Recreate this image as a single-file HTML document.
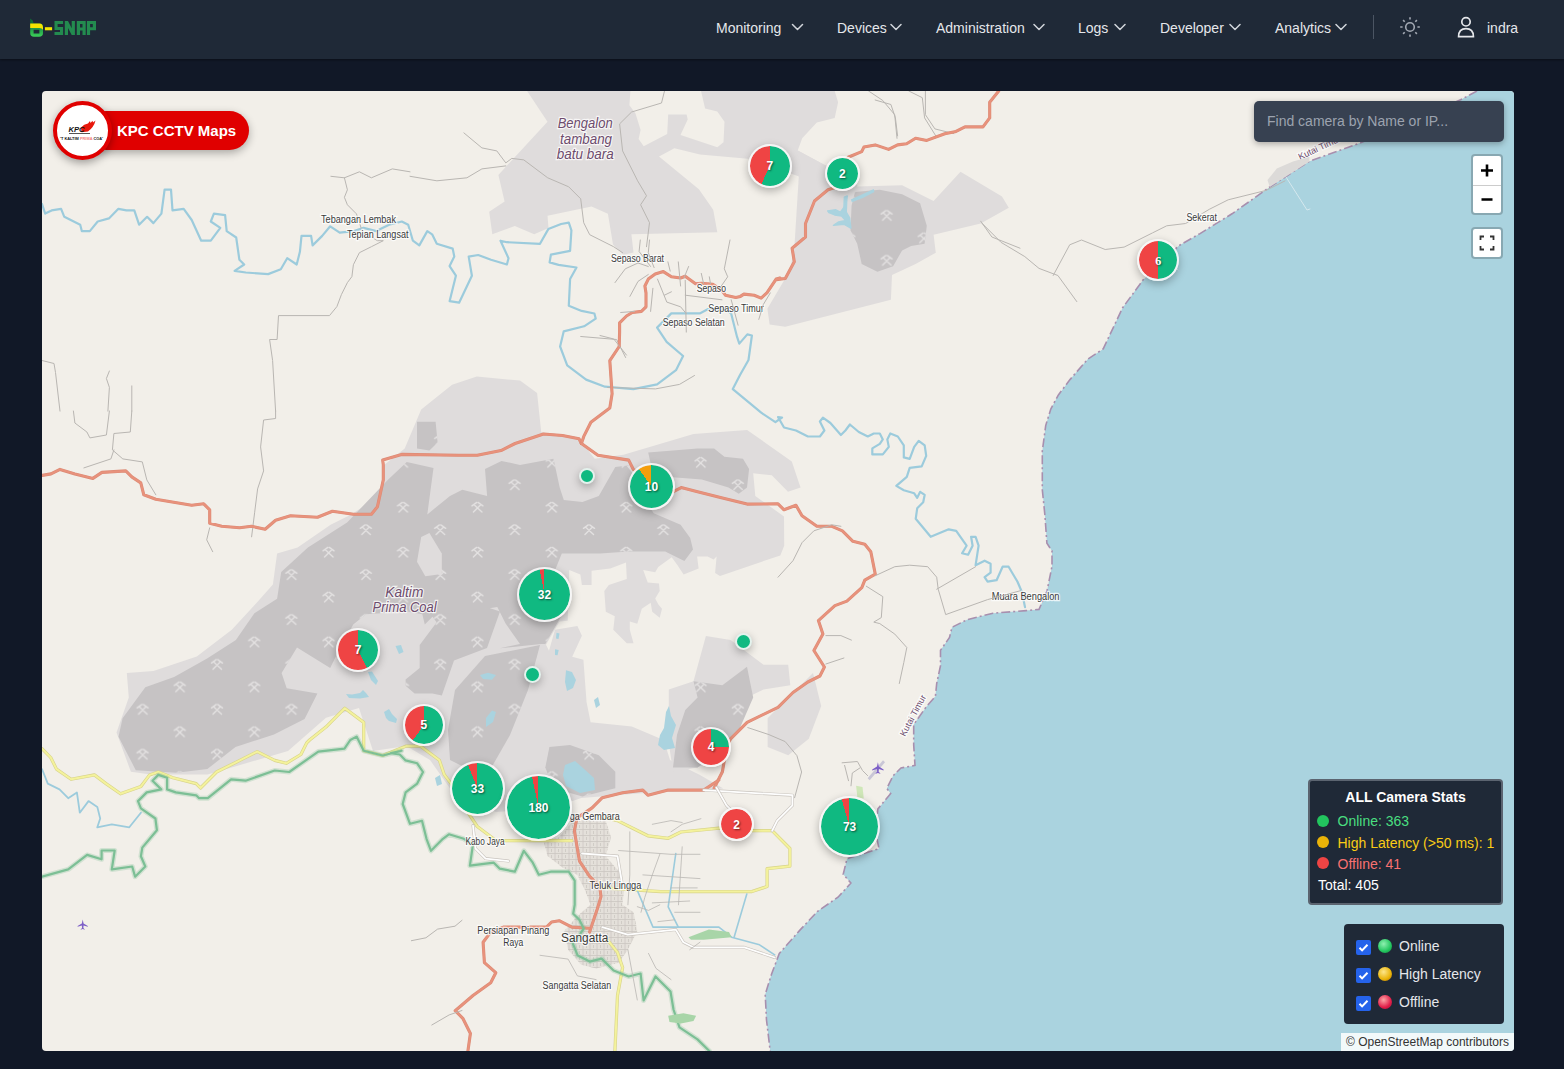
<!DOCTYPE html>
<html><head><meta charset="utf-8">
<style>
*{margin:0;padding:0;box-sizing:border-box}
html,body{width:1564px;height:1069px;overflow:hidden;background:#111827;font-family:"Liberation Sans",sans-serif}
#hdr{position:absolute;left:0;top:0;width:1564px;height:59px;background:#1f2937;box-shadow:0 1px 2px rgba(0,0,0,.4)}
.nav{position:absolute;top:19px;font-size:14px;color:#e5e7eb;line-height:18px;white-space:nowrap}
.chev{position:absolute;top:23px}
#map{position:absolute;left:42px;top:91px;width:1472px;height:960px;background:#f2efe9;overflow:hidden;border-radius:4px}
#map svg{position:absolute;left:0;top:0}

.mk{position:absolute;border-radius:50%;background-clip:padding-box;border-style:solid;border-color:rgba(246,246,246,.92);box-shadow:0 3px 8px rgba(0,0,0,.28);text-align:center}
.mk span{display:block;color:#fff;font-weight:bold;font-size:12px;text-shadow:1px 1px 2px rgba(0,0,0,.55)}
#logo{position:absolute;left:10px;top:10px}
#pill{position:absolute;left:45px;top:19.7px;width:162px;height:39px;background:#e00000;border-radius:20px;box-shadow:0 3px 8px rgba(0,0,0,.3)}
#pill span{position:absolute;left:30px;top:0;line-height:39px;color:#fff;font-weight:bold;font-size:15px;white-space:nowrap}
#circ{position:absolute;left:10.5px;top:9.5px;width:59px;height:59px;border-radius:50%;background:#fff;border:4.6px solid #e00000;box-shadow:0 3px 8px rgba(0,0,0,.35)}
#search{position:absolute;left:1212px;top:10px;width:250px;height:41px;background:#374151;border-radius:5px;box-shadow:0 2px 6px rgba(0,0,0,.3)}
#search span{position:absolute;left:13px;top:0;line-height:41px;color:#9ca3af;font-size:14px;white-space:nowrap}
.lbtn{position:absolute;left:1429px;width:32px;background:#fff;border:2px solid rgba(0,0,0,.2);border-radius:4px;background-clip:padding-box}
#stats{position:absolute;left:1266px;top:688px;width:195px;height:126px;background:#1f2937;border:2px solid rgba(140,150,160,.55);border-radius:4px;color:#fff;font-size:14px}
#stats .r{position:absolute;left:26px;white-space:nowrap;line-height:16px}
#stats .d{position:absolute;left:7px;width:12px;height:12px;border-radius:50%}
#legend{position:absolute;left:1302px;top:833px;width:160px;height:100px;background:#1f2937;border-radius:4px;color:#e5e7eb;font-size:14px}
#legend .cb{position:absolute;left:12px;width:15px;height:15px;background:#2563eb;border-radius:2px}
#legend .ball{position:absolute;left:34px;width:14px;height:14px;border-radius:50%}
#legend .t{position:absolute;left:55px;line-height:16px;white-space:nowrap}
#attr{position:absolute;left:1299px;top:942px;width:173px;height:18px;background:rgba(255,255,255,.85);font-size:12px;color:#333;line-height:18px;padding-left:5px;white-space:nowrap}
</style></head><body>
<div id="hdr">
 <svg style="position:absolute;left:0;top:0" width="100" height="59" viewBox="0 0 100 59">
 <defs><linearGradient id="lg1" x1="0" y1="0" x2="0" y2="1"><stop offset="0" stop-color="#0f7a3a"/><stop offset="1" stop-color="#3ccf5a"/></linearGradient></defs>
 <path d="M30.2 18.5 L32.6 20.5 L33.8 23.6 L30.2 23.6 Z" fill="#0e6b35"/>
 <path d="M30.2 23.6 H40 Q43 23.6 43 27 V33 Q43 36.8 39 36.8 H34 Q30.2 36.8 30.2 33 Z M33.6 29.8 V33.6 H39.4 V29.8 Z" fill="url(#lg1)" fill-rule="evenodd"/>
 <path d="M30.2 23.6 H39.5 Q42.8 23.8 43 27.5 V29.8 Q42 28 39.5 28 H30.2 Z" fill="#f5e400"/>
 <rect x="44.9" y="27.2" width="7.2" height="3.1" fill="#f5e400"/>
 <g fill="#238b4f">
  <path d="M54.5 21h8.6v3.1h-5.5v2.8h5.5v8.2h-8.6v-3.1h5.5v-2.1h-5.5z"/>
  <path d="M64.8 21h3.2l3.7 7.2V21h3.2v14.1h-3.2l-3.7-7.2v7.2h-3.2z"/>
  <path d="M76.8 21h8.9v14.1h-3.2v-4.6h-2.5v4.6h-3.2z M80 24.1v3.3h2.5v-3.3z" fill-rule="evenodd"/>
  <path d="M86.9 21h9.1v9.3h-5.9v4.8h-3.2z M90.1 24.1v3.1h2.7v-3.1z" fill-rule="evenodd"/>
 </g>
</svg>
 <svg style="position:absolute;left:0;top:0" width="1564" height="59" viewBox="0 0 1564 59">
  <g fill="none" stroke="#d1d5db" stroke-width="1.5" stroke-linecap="round" stroke-linejoin="round">
   <path d="M792.5 24.5l5 5 5-5M891 24.5l5 5 5-5M1034 24.5l5 5 5-5M1115 24.5l5 5 5-5M1230 24.5l5 5 5-5M1336 24.5l5 5 5-5"/>
  </g>
  <rect x="1373" y="15" width="1" height="24" fill="#4b5563"/>
  <g stroke="#a3a9b3" stroke-width="1.6" fill="none">
   <circle cx="1410" cy="27" r="4.3"/>
   <path d="M1410 17.2v2.4M1410 34.4v2.4M1400.2 27h2.4M1417.4 27h2.4M1403.1 20.1l1.6 1.6M1415.3 32.3l1.6 1.6M1403.1 33.9l1.6-1.6M1415.3 21.7l1.6-1.6" stroke-linecap="butt"/>
  </g>
  <g stroke="#e5e7eb" stroke-width="1.7" fill="none">
   <circle cx="1466" cy="21.8" r="4.2"/>
   <path d="M1458.6 36.6 Q1458.6 28.6 1466 28.6 Q1473.4 28.6 1473.4 36.6 Z"/>
  </g>
 </svg>
 <div class="nav" style="left:716px">Monitoring</div>
 <div class="nav" style="left:837px">Devices</div>
 <div class="nav" style="left:936px">Administration</div>
 <div class="nav" style="left:1078px">Logs</div>
 <div class="nav" style="left:1160px">Developer</div>
 <div class="nav" style="left:1275px">Analytics</div>
 <div class="nav" style="left:1487px">indra</div>
</div>
<div id="map">
<svg width="1472" height="960" viewBox="42 91 1472 960">
<defs><pattern id="pick" patternUnits="userSpaceOnUse" x="142.6" y="709.6" width="74.4" height="44.9"><g fill="none" stroke="#e4e2e2" stroke-width="1.3" stroke-linecap="round"><g id="pk"><path d="M-4 4.5L3.5-3M0.7-5.1L5.5-1.6M4.5 4.5L-3.5-3M-0.7-5.1L-5.5-1.6"/></g><use href="#pk" x="74.4"/><use href="#pk" y="44.9"/><use href="#pk" x="74.4" y="44.9"/><use href="#pk" x="37.2" y="22.45"/></g></pattern></defs>
<path d="M1477,91 L1460.6,99.8 L1360.6,142.8 L1309,161.5 L1269.8,187 L1232,213.8 L1200,233.6 L1178.8,245.7 L1143,280 L1122.5,308 L1103.2,348.9 L1087.9,359.1 L1070,379.6 L1058.4,394.9 L1050.8,409 L1045.7,425.6 L1042.3,451.2 L1042.3,489.6 L1044.9,515.1 L1046.9,543.3 L1052,551 L1052,566.3 L1047,591 L1039,609.4 L1026.2,610.6 L993,613.2 L967.4,619.6 L952,627.3 L949.5,637.5 L940.5,650.3 L940.5,665.6 L936.7,683.5 L935.4,696.3 L926.5,706.5 L913.7,724.5 L913.7,745 L915,765.4 L901,768 L893.2,775.6 L886.8,788.4 L890.7,793.5 L877.9,808.9 L875.3,831 L879,848.6 L847,858.8 L843.2,874.2 L850.9,883.1 L838,897.2 L817.6,911.3 L799.7,930.4 L779.3,953.5 L771.6,974 L765.2,994.4 L766.5,1020 L770.3,1052 L1515,1052 L1515,90 Z" fill="#aad3df"/>
<path d="M1477,91 L1460.6,99.8 L1360.6,142.8 L1309,161.5 L1269.8,187 L1232,213.8 L1200,233.6 L1178.8,245.7 L1143,280 L1122.5,308 L1103.2,348.9 L1087.9,359.1 L1070,379.6 L1058.4,394.9 L1050.8,409 L1045.7,425.6 L1042.3,451.2 L1042.3,489.6 L1044.9,515.1 L1046.9,543.3 L1052,551 L1052,566.3 L1047,591 L1039,609.4 L1026.2,610.6 L993,613.2 L967.4,619.6 L952,627.3 L949.5,637.5 L940.5,650.3 L940.5,665.6 L936.7,683.5 L935.4,696.3 L926.5,706.5 L913.7,724.5 L913.7,745 L915,765.4 L901,768 L893.2,775.6 L886.8,788.4 L890.7,793.5 L877.9,808.9 L875.3,831 L879,848.6 L847,858.8 L843.2,874.2 L850.9,883.1 L838,897.2 L817.6,911.3 L799.7,930.4 L779.3,953.5 L771.6,974 L765.2,994.4 L766.5,1020 L770.3,1052" fill="none" stroke="#a88fae" stroke-width="1.6" stroke-dasharray="9 3 2 3"/>
<path d="M130.9,771.8 L116.5,732.6 L128.8,697.6 L126.8,672.9 L153.5,670.9 L196.8,656.5 L231.8,629.7 L256.5,602.9 L272.9,584.4 L277.1,553.5 L297.6,547.4 L330.6,524.7 L351.2,514.4 L380.0,495.9 L384.1,465.0 L404.7,448.5 L421.2,409.4 L452.1,384.7 L476.8,376.5 L520.0,380.6 L537.1,392.9 L541.2,432.1 L580.3,440.3 L594.7,458.8 L623.5,454.7 L693.5,434.1 L747.1,430.0 L791.8,461.4 L799.5,484.4 L800.6,487.6 L788,491.8 L771.8,475.3 L753.2,473.2 L755.3,495.9 L784,516.5 L784.2,545.8 L780.3,555.4 L720.0,575.9 L715.1,572.9 L716.6,556.5 L713.6,559.5 L707.6,556.5 L697.1,556.5 L698.6,568.4 L683.6,574.4 L677.7,565.4 L671.7,557.2 L658.2,566.9 L655.2,572.2 L643.2,569.9 L647.7,582.6 L659.0,583.4 L659.7,590.9 L655.2,598.4 L658.2,604.3 L662.0,608.8 L659.7,617.8 L652.2,611.8 L650.7,602.8 L641.8,608.8 L637.3,623.8 L629.8,621.6 L629.8,629.8 L633.5,643.2 L626.8,643.2 L613.3,629.8 L614.8,616.3 L605.8,611.8 L604.3,590.9 L608.8,584.9 L626.8,578.9 L626.0,562.4 L610.3,568.4 L591.6,570.7 L591.6,584.9 L581.9,584.9 L580.4,574.4 L569.2,569.9 L567.7,620.8 L559.5,621.6 L546.0,644.7 L549.0,650.7 L555.0,629.8 L577.4,626.0 L581.9,635.8 L572.2,656.7 L583.4,659.7 L586.4,700.0 L586.5,701.8 L590.6,722.3 L631.8,726.5 L660.6,738.8 L664.7,743 L670,760 L700,775 L723.3,788.6 L638,793.4 L581.4,798 L553,807.6 L496,812 L453.6,793.4 L430,760 L406.3,746 L373,751 L359,708 L326,717.7 L288,751 L207.6,774.5 L150.8,774.5 Z" fill="#dfdcdc"/>
<path d="M705.9,635.9 L730.6,640 L763.5,664.7 L788.2,664.7 L790.3,685.3 L763.5,689.4 L747,697.6 L730.6,738.8 L722.4,755.3 L697.6,767.6 L673,771.8 L668.8,743 L668.8,689.4 L693.5,681.2 Z" fill="#dfdcdc"/>
<path d="M767.6,718.2 L813,673 L821.2,705.9 L808.8,738.8 L788.2,755.3 L767.6,747 Z" fill="#dfdcdc"/>
<path d="M118.5,736.8 L122.6,718.2 L145.3,687.3 L174.1,677.1 L207.1,658.5 L235.9,640.0 L254.4,613.2 L277.1,598.8 L281.2,572.1 L307.9,547.4 L347.1,522.6 L388.2,479.4 L406.8,462.1 L433.5,467.9 L427.3,514.4 L450.0,495.9 L462.3,489.7 L487.1,495.9 L485.0,469.1 L501.5,460.9 L520.0,465.0 L553.5,458.8 L559.7,487.6 L563.8,500.0 L582.4,502.1 L598.8,495.9 L615.3,467.1 L631.8,465.0 L626.9,466.2 L632.6,472.9 L638.4,490.2 L653.7,513.2 L680.6,524.7 L690.2,538.1 L693.0,549.6 L684.4,561.1 L665.2,551.5 L628.8,551.5 L600.0,553.5 L590.6,553.5 L561.8,553.5 L553.5,574.1 L544.5,594.7 L561.8,615.3 L545.3,644.1 L541.2,644.1 L500.0,648.2 L520,644 L505.6,623.5 L497.3,607 L470.6,611.2 L450,617.3 L437.6,623.5 L432.5,616.7 L424.8,624.4 L422.3,614.2 L407,611.6 L366,614.2 L353.2,624.4 L335.3,657.6 L330.2,667.9 L297,647.4 L281.6,673 L286.7,688.3 L317.4,693.5 L304.6,719 L274,734.4 L235.5,747 L207.4,769 L176.7,772.7 L135.8,770.2 Z" fill="#c6c3c4"/><path d="M118.5,736.8 L122.6,718.2 L145.3,687.3 L174.1,677.1 L207.1,658.5 L235.9,640.0 L254.4,613.2 L277.1,598.8 L281.2,572.1 L307.9,547.4 L347.1,522.6 L388.2,479.4 L406.8,462.1 L433.5,467.9 L427.3,514.4 L450.0,495.9 L462.3,489.7 L487.1,495.9 L485.0,469.1 L501.5,460.9 L520.0,465.0 L553.5,458.8 L559.7,487.6 L563.8,500.0 L582.4,502.1 L598.8,495.9 L615.3,467.1 L631.8,465.0 L626.9,466.2 L632.6,472.9 L638.4,490.2 L653.7,513.2 L680.6,524.7 L690.2,538.1 L693.0,549.6 L684.4,561.1 L665.2,551.5 L628.8,551.5 L600.0,553.5 L590.6,553.5 L561.8,553.5 L553.5,574.1 L544.5,594.7 L561.8,615.3 L545.3,644.1 L541.2,644.1 L500.0,648.2 L520,644 L505.6,623.5 L497.3,607 L470.6,611.2 L450,617.3 L437.6,623.5 L432.5,616.7 L424.8,624.4 L422.3,614.2 L407,611.6 L366,614.2 L353.2,624.4 L335.3,657.6 L330.2,667.9 L297,647.4 L281.6,673 L286.7,688.3 L317.4,693.5 L304.6,719 L274,734.4 L235.5,747 L207.4,769 L176.7,772.7 L135.8,770.2 Z" fill="url(#pick)"/>
<path d="M405.6,679.4 L419.7,667.9 L419.7,644.9 L442.7,614.2 L488.7,607.8 L500,611.6 L487,648 L454,660.6 L441.8,695.6 L432.5,693.5 L414.6,693.5 L405.6,685.8 Z" fill="#c6c3c4"/><path d="M405.6,679.4 L419.7,667.9 L419.7,644.9 L442.7,614.2 L488.7,607.8 L500,611.6 L487,648 L454,660.6 L441.8,695.6 L432.5,693.5 L414.6,693.5 L405.6,685.8 Z" fill="url(#pick)"/>
<path d="M448,730 L455,690 L485,656 L540,645 L528,690 L510,735 L490,770 L470,770 L450,760 Z" fill="#c6c3c4"/><path d="M448,730 L455,690 L485,656 L540,645 L528,690 L510,735 L490,770 L470,770 L450,760 Z" fill="url(#pick)"/>
<path d="M693.5,681.2 L722.4,685.3 L747,666.8 L753.2,697.6 L738.8,730.6 L722.4,747 L697.6,767.6 L673,767.6 L677,734.7 L685.3,710 L697.6,697.6 Z" fill="#c6c3c4"/><path d="M693.5,681.2 L722.4,685.3 L747,666.8 L753.2,697.6 L738.8,730.6 L722.4,747 L697.6,767.6 L673,767.6 L677,734.7 L685.3,710 L697.6,697.6 Z" fill="url(#pick)"/>
<path d="M549.4,747 L570,745 L598.8,755.3 L615.3,771.8 L615.3,788.2 L582.4,796.5 L553.5,788.2 L545.3,767.6 Z" fill="#c6c3c4"/><path d="M549.4,747 L570,745 L598.8,755.3 L615.3,771.8 L615.3,788.2 L582.4,796.5 L553.5,788.2 L545.3,767.6 Z" fill="url(#pick)"/>
<path d="M648.2,452.6 L697.6,448.5 L714.1,448.5 L724.4,456.8 L743,458.8 L749.1,469.1 L747,487.6 L738.8,493.8 L728.5,487.6 L701.8,479.4 L672.9,477.3 L652.4,471.2 Z" fill="#c6c3c4"/><path d="M648.2,452.6 L697.6,448.5 L714.1,448.5 L724.4,456.8 L743,458.8 L749.1,469.1 L747,487.6 L738.8,493.8 L728.5,487.6 L701.8,479.4 L672.9,477.3 L652.4,471.2 Z" fill="url(#pick)"/>
<path d="M417,421.8 L435.6,421.8 L437.6,442.4 L429.4,450.6 L417,448.5 Z" fill="#c6c3c4"/><path d="M417,421.8 L435.6,421.8 L437.6,442.4 L429.4,450.6 L417,448.5 Z" fill="url(#pick)"/>
<path d="M421.2,537 L429.4,533 L441.8,553.5 L441.8,574.1 L425.3,576.2 L417,561.8 Z" fill="#dfdcdc"/>
<path d="M527.1,91.0 L834.7,91.0 L838.1,102.2 L834.7,117.9 L816.8,122.4 L802.2,138.2 L797.7,150.5 L826.6,166 L857.7,185.6 L840,200 L799,176.4 L750.6,159.1 L700,154.5 L674.4,148.3 L659.0,156.5 L698.9,189.2 L713.2,209.7 L717.3,232.2 L631.4,234.2 L633.5,252.6 L623.2,254.7 L613.0,244.5 L607.9,213.8 L591.5,206.6 L547.5,215.8 L548.5,228.1 L534.2,234.2 L514.8,226.0 L492.3,234.2 L489.2,211.7 L504.6,201.5 L498.4,174.9 L547.5,121.7 Z" fill="#dfdcdc"/>
<path d="M630.4,91.0 L701.0,91.0 L705.1,108.4 L717.3,111.5 L724.5,121.7 L723.5,142.2 L717.3,147.3 L680.5,135.0 L687.7,119.6 L686.6,114.5 L668.2,114.5 L667.2,134.0 L643.7,146.2 L638.6,139.1 L640.6,129.9 L635.5,113.5 L629.4,105.3 Z" fill="#f2efe9"/>
<path d="M797.7,150.5 L826.6,166 L857.2,186.4 L902.1,185.3 L933.6,201.0 L960.5,171.8 L1002.0,196.5 L1008.8,207.8 L980.7,223.5 L933.6,234.7 L935.8,252.7 L915.6,263.9 L892.0,275.1 L890.9,299.8 L785.3,326.8 L769.6,324.6 L767.4,308.8 L789.8,270.7 L794.3,248.2 L798.8,176.3 Z" fill="#dfdcdc"/>
<path d="M851.6,205.5 L855.0,192.1 L879.7,189.8 L902.1,194.3 L920.1,203.3 L926.8,225.7 L924.6,243.7 L911.1,246.0 L902.1,250.4 L893.1,266.2 L877.4,271.8 L861.7,263.9 L857.2,243.7 L850.5,230.2 Z" fill="#c6c3c4"/><path d="M851.6,205.5 L855.0,192.1 L879.7,189.8 L902.1,194.3 L920.1,203.3 L926.8,225.7 L924.6,243.7 L911.1,246.0 L902.1,250.4 L893.1,266.2 L877.4,271.8 L861.7,263.9 L857.2,243.7 L850.5,230.2 Z" fill="url(#pick)"/>
<path d="M850.8,199.4 L863.4,193.7 L873.8,189.1 L874.4,191.9 L863.4,197.7 L851.9,202.3 Z" fill="#aad3df"/>
<path d="M827.7,210.9 L835.8,209.8 L840.4,212.1 L843.9,207.5 L844.4,197.1 L847.3,196.0 L846.7,200.6 L846.2,212.1 L849.6,217.8 L850.8,228.2 L843.9,224.2 L833.5,225.3 L838.7,221.9 L845.6,220.4 L841.6,216.1 L834.7,214.9 L828.9,212.6 Z" fill="#aad3df" stroke="#aad3df" stroke-width="1.5" stroke-linejoin="round"/>
<path d="M556.5,632.8 L559.5,633.5 L558.5,639 L556,638.5 Z" fill="#aad3df"/>
<path d="M555,649.2 L558.7,650 L557.5,655.2 L555,655 Z" fill="#aad3df"/>
<path d="M566,670.2 L572,672 L576,680 L573,688 L567,691 L565,682 Z" fill="#aad3df"/>
<path d="M368,672 L372,671.5 L378,681 L376,685 L371,680 Z" fill="#aad3df"/>
<path d="M346,694 L352,694.5 L360,693 L363,690 L366,693 L369,697 L360,698.5 L349,698 Z" fill="#aad3df"/>
<path d="M384,712 L389,709 L392,714 L397,719 L396,723 L389,721 L386,718 Z" fill="#aad3df"/>
<path d="M395.5,646 L401,645 L403.5,652 L399,654 Z" fill="#aad3df"/>
<path d="M480,675 L488,672.7 L496,675 L492,679.8 L483,679 Z" fill="#aad3df"/>
<path d="M486,718 L492,710.6 L496,712 L493,722 L486,727 Z" fill="#aad3df"/>
<path d="M660,735 L664,728 L666,712 L669,706 L671,716 L676,725 L672,738 L675,748 L664,750 L658,745 Z" fill="#aad3df"/>
<path d="M565,765 L575,761 L583,768 L594,778 L595,790 L580,793 L566,786 L563,775 Z" fill="#aad3df"/>
<path d="M435,778 L440,775 L442,784 L437,786 Z" fill="#aad3df"/>
<path d="M594,700 L598,697 L600,705 L596,708 Z" fill="#aad3df"/>
<defs><pattern id="st" patternUnits="userSpaceOnUse" width="7" height="6"><path d="M0 1.5H7M2 0V6M5.5 3V6" stroke="#cbc6c1" stroke-width="0.8"/></pattern><pattern id="st2" patternUnits="userSpaceOnUse" width="16" height="13"><path d="M0 2H16M5 0V13" stroke="#dad5cf" stroke-width="0.7"/></pattern></defs><path d="M543.7,841.2 L558.7,837.4 L573.7,820.6 L605.5,820.6 L611.1,837.4 L605.5,856.1 L618.6,871.1 L624.2,889.8 L622.3,904.8 L633.6,912.3 L637.3,931.0 L627.9,949.7 L618.6,962.8 L596.1,968.4 L581.2,964.7 L568.1,949.7 L564.3,931.0 L577.4,916.0 L590.5,904.8 L584.9,889.8 L577.4,874.9 L562.5,867.4 L547.5,856.1 Z" fill="#e4e0da"/><path d="M543.7,841.2 L558.7,837.4 L573.7,820.6 L605.5,820.6 L611.1,837.4 L605.5,856.1 L618.6,871.1 L624.2,889.8 L622.3,904.8 L633.6,912.3 L637.3,931.0 L627.9,949.7 L618.6,962.8 L596.1,968.4 L581.2,964.7 L568.1,949.7 L564.3,931.0 L577.4,916.0 L590.5,904.8 L584.9,889.8 L577.4,874.9 L562.5,867.4 L547.5,856.1 Z" fill="url(#st)"/>
<path d="M42.0,204.0 L45.2,213.6 L51.6,210.4 L61.1,208.8 L64.3,216.8 L80.2,224.7 L81.8,231.1 L89.8,231.1 L97.7,221.5 L108.9,218.4 L118.4,208.8 L126.4,210.4 L134.3,210.4 L139.1,224.7 L147.1,216.8 L153.4,223.1 L161.4,213.6 L164.6,189.7 L171.0,189.7 L172.5,210.4 L183.7,208.8 L191.7,220.0 L201.2,240.7 L210.8,240.7 L220.3,227.9 L210.8,221.5 L213.9,213.6 L225.1,215.2 L226.7,231.1 L236.2,237.5 L239.4,259.8 L244.2,264.5 L234.6,270.9 L245.8,272.5 L268.1,274.1 L280.8,269.3 L287.2,258.2 L296.7,264.5 L299.9,251.8 L301.5,235.9 L311.1,235.9 L312.6,245.4 L322.2,235.9 L330.2,226.3 L339.7,232.7 L354.0,231.1 L363.6,227.9 L376.3,231.1 L389.1,224.7 L401.8,221.5 L408.2,224.7 L412.9,240.7 L419.3,245.4 L427.3,231.1 L432.1,234.3 L436.8,243.8 L452.7,248.6 L454.3,256.6 L449.6,266.1 L455.9,275.7 L449.6,301.2 L459.1,302.7 L471.9,275.7 L468.7,256.6 L478.2,255.0 L491.0,259.8 L506.9,264.5 L508.5,258.2 L500.5,240.7 L506.9,242.2 L540.0,243.8 L548.3,229.1 L548.3,229.1 L561.1,224.0 L568.8,222.7 L571.4,230.4 L570.1,250.8 L550.9,254.7 L549.6,262.4 L558.6,264.9 L576.5,267.5 L570.1,279.0 L568.8,305.8 L581.6,310.9 L594.4,313.5 L595.7,318.6 L584.1,326.3 L563.7,331.4 L560.1,346.5 L567.2,365.4 L586.1,379.6 L605.0,386.7 L633.4,389.1 L657.1,384.4 L676.0,370.2 L683.1,356.0 L666.6,341.8 L657.1,327.6 L671.3,313.4 L699.7,313.4 L708.2,309.1 L725.4,309.1 L731.2,313.7 L737.0,336.7 L739.3,343.6 L747.3,334.4 L751.9,335.5 L748.5,360.0 L740,375 L732.8,389.1 L761.2,412.7 L775.4,422.2 L782.0,417.5 L778.0,417.0 L784.0,427.5 L796.0,430.5 L807.9,436.5 L819.9,436.5 L824.4,430.5 L819.9,421.5 L822.9,417.6 L830.4,423.0 L840.9,435.0 L845.4,430.5 L849.9,424.5 L858.8,432.0 L867.8,436.5 L873.8,433.5 L879.8,433.5 L882.8,439.4 L879.8,443.9 L872.3,448.4 L872.3,454.4 L882.8,454.4 L888.8,446.9 L887.3,439.4 L890.3,433.5 L897.8,436.5 L903.8,445.4 L903.8,457.4 L909.7,458.9 L914.2,446.9 L918.7,440.9 L924.7,445.4 L926.2,455.9 L921.7,466.4 L909.7,467.9 L906.8,476.9 L896.3,485.9 L903.8,490.3 L914.2,493.3 L917.2,497.8 L920.2,491.8 L924.7,494.8 L923.2,502.3 L917.2,508.3 L915.7,518.8 L930.7,536.8 L948.7,529.3 L956.2,530.8 L966.6,545.7 L962.1,553.2 L968.1,554.7 L972.6,545.7 L971.1,536.8 L975.6,536.8 L978.6,545.7 L975.6,565.2 L984.6,560.7 L990.6,563.7 L990.6,572.7 L984.6,577.2 L987.6,581.7 L996.6,580.2 L1002.6,566.7 L1008.6,566.7 L1017.5,581.7 L1022.0,592.2 L1025.0,607.1" fill="none" stroke="#9ccbdc" stroke-width="2.2" stroke-linejoin="round" stroke-linecap="round" />
<path d="M330.9,176.3 L344.4,177.8 L347.4,189.8 L344.4,197.3 L347.4,204.8 L356.4,213.8 L362.4,231.7 L377.4,240.7 L383.3,240.7 L371.4,246.7 L359.4,252.7 L353.4,264.7 L351.9,276.6 L347.4,282.6 L341.4,294.6 L336.9,306.6 L329.5,315.6 L278.5,315.6 L277.1,339.5 L269.6,339.5 L272.6,360.5 L275.6,411.1" fill="none" stroke="#b9b6b2" stroke-width="1.0" stroke-linejoin="round" stroke-linecap="round" />
<path d="M344.4,177.8 L359.4,171.8 L371.4,177.8 L392.3,168.9 L410.0,171.8" fill="none" stroke="#b9b6b2" stroke-width="1.0" stroke-linejoin="round" stroke-linecap="round" />
<path d="M42.0,360.5 L54.0,363.5 L55.5,372.5 L60.0,411.1" fill="none" stroke="#b9b6b2" stroke-width="1.0" stroke-linejoin="round" stroke-linecap="round" />
<path d="M109.4,371.0 L106.4,378.5 L109.4,387.4 L107.9,411.1" fill="none" stroke="#b9b6b2" stroke-width="1.0" stroke-linejoin="round" stroke-linecap="round" />
<path d="M131.8,385.9 L131.8,411.1" fill="none" stroke="#b9b6b2" stroke-width="1.0" stroke-linejoin="round" stroke-linecap="round" />
<path d="M73.4,411.0 L74.9,423.0 L86.9,432.0 L89.9,437.9 L106.4,435.0 L109.4,411.0" fill="none" stroke="#b9b6b2" stroke-width="1.0" stroke-linejoin="round" stroke-linecap="round" />
<path d="M131.8,411.0 L130.3,432.0 L113.9,433.5 L112.4,449.9 L122.8,458.9 L142.3,461.9 L146.8,479.9 L155.8,494.8" fill="none" stroke="#b9b6b2" stroke-width="1.0" stroke-linejoin="round" stroke-linecap="round" />
<path d="M83.9,467.9 L110.9,458.9 L113.9,449.9" fill="none" stroke="#b9b6b2" stroke-width="1.0" stroke-linejoin="round" stroke-linecap="round" />
<path d="M275.6,411.0 L275.6,418.5 L263.6,420.0 L260.6,446.9 L263.6,470.9 L257.6,488.9 L254.6,512.8 L251.6,536.8" fill="none" stroke="#b9b6b2" stroke-width="1.0" stroke-linejoin="round" stroke-linecap="round" />
<path d="M209.7,527.8 L206.7,539.8 L212.7,551.7" fill="none" stroke="#b9b6b2" stroke-width="1.0" stroke-linejoin="round" stroke-linecap="round" />
<path d="M463.9,132.9 L481.9,147.9 L496.8,150.9 L505.8,162.9 L511.8,158.4 L523.8,159.9 L547.7,177.8 L568.7,186.8 L580.7,198.8 L583.7,222.7 L589.7,234.7 L613.6,246.7 L622.6,252.7" fill="none" stroke="#b9b6b2" stroke-width="1.0" stroke-linejoin="round" stroke-linecap="round" />
<path d="M410.0,176.3 L436.9,180.8 L466.9,177.8 L481.9,168.9 L505.8,165.9" fill="none" stroke="#b9b6b2" stroke-width="1.0" stroke-linejoin="round" stroke-linecap="round" />
<path d="M664.5,91.0 L661.5,103.0 L631.6,112.0 L619.6,123.9 L622.6,150.9 L637.6,180.8 L646.5,195.8 L640.6,204.8 L649.5,222.7 L646.5,246.7" fill="none" stroke="#b9b6b2" stroke-width="1.0" stroke-linejoin="round" stroke-linecap="round" />
<path d="M580.7,336.5 L616.6,339.5 L625.6,357.5" fill="none" stroke="#b9b6b2" stroke-width="1.0" stroke-linejoin="round" stroke-linecap="round" />
<path d="M607.6,387.4 L655.5,388.9 L679.5,384.4 L694.5,375.5" fill="none" stroke="#b9b6b2" stroke-width="1.0" stroke-linejoin="round" stroke-linecap="round" />
<path d="M868.6,91.0 L882.8,100.5 L894.7,114.7 L897.0,138.3" fill="none" stroke="#b9b6b2" stroke-width="1.0" stroke-linejoin="round" stroke-linecap="round" />
<path d="M925.4,91.0 L925.4,114.7 L934.9,128.9 L953.8,133.6" fill="none" stroke="#b9b6b2" stroke-width="1.0" stroke-linejoin="round" stroke-linecap="round" />
<path d="M982.2,223.5 L1001.1,242.4 L1024.8,256.6 L1039.0,268.4 L1057.9,275.5 L1076.8,301.6" fill="none" stroke="#b9b6b2" stroke-width="1.0" stroke-linejoin="round" stroke-linecap="round" />
<path d="M1053.2,275.5 L1069.7,244.8 L1081.5,240.0 L1105.2,249.5 L1124.1,247.1 L1152.5,232.9 L1166.7,225.8 L1185.6,223.5 L1209.3,209.3 L1228.2,199.8 L1266.1,190.4 L1285.0,180.9" fill="none" stroke="#b9b6b2" stroke-width="1.0" stroke-linejoin="round" stroke-linecap="round" />
<path d="M747.8,727.6 L768.9,734.6 L785.2,741.6 L796.9,755.6 L801.6,772.0 L794.6,797.7" fill="none" stroke="#b9b6b2" stroke-width="1.0" stroke-linejoin="round" stroke-linecap="round" />
<path d="M875.2,100.0 L890.9,104.5 L895.4,117.9 L897.6,135.9" fill="none" stroke="#b9b6b2" stroke-width="1.0" stroke-linejoin="round" stroke-linecap="round" />
<path d="M908.8,91.0 L922.3,97.7 L924.6,117.9 L935.8,135.9" fill="none" stroke="#b9b6b2" stroke-width="1.0" stroke-linejoin="round" stroke-linecap="round" />
<path d="M980.7,221.2 L991.9,237.0 L1020.0,248.2" fill="none" stroke="#b9b6b2" stroke-width="1.0" stroke-linejoin="round" stroke-linecap="round" />
<path d="M42.0,475.4 L51.0,473.9 L60.0,469.4 L74.9,473.9 L92.9,478.4 L101.9,472.4 L125.8,470.9 L131.8,476.9 L140.8,482.9 L143.8,494.8 L155.8,499.3 L173.7,502.3 L191.7,505.3 L203.7,503.8 L209.7,509.8 L209.7,523.3 L221.7,526.3 L239.6,527.8 L251.6,526.3 L265.1,529.3 L275.6,520.3 L290.5,515.8 L317.5,517.3 L332.4,511.3 L353.4,514.3 L371.4,514.3 L377.4,506.8 L383.3,479.9 L383.3,464.9 L382.7,460.1 L401.6,454.4 L458.4,455.3 L477.3,455.3 L501.0,450.6 L515.1,443.5 L543.5,434.0 L562.5,435.5 L579.0,438.8 L581.4,443.5" fill="none" stroke="#dc8b76" stroke-width="3.1" stroke-linejoin="round" stroke-linecap="round"/><path d="M42.0,475.4 L51.0,473.9 L60.0,469.4 L74.9,473.9 L92.9,478.4 L101.9,472.4 L125.8,470.9 L131.8,476.9 L140.8,482.9 L143.8,494.8 L155.8,499.3 L173.7,502.3 L191.7,505.3 L203.7,503.8 L209.7,509.8 L209.7,523.3 L221.7,526.3 L239.6,527.8 L251.6,526.3 L265.1,529.3 L275.6,520.3 L290.5,515.8 L317.5,517.3 L332.4,511.3 L353.4,514.3 L371.4,514.3 L377.4,506.8 L383.3,479.9 L383.3,464.9 L382.7,460.1 L401.6,454.4 L458.4,455.3 L477.3,455.3 L501.0,450.6 L515.1,443.5 L543.5,434.0 L562.5,435.5 L579.0,438.8 L581.4,443.5" fill="none" stroke="#e8927c" stroke-width="2.0" stroke-linejoin="round" stroke-linecap="round"/>
<path d="M581.4,443.5 L583.8,436.4 L590.9,422.2 L609.8,408.0 L612.1,393.8 L609.8,360.7 L619.2,346.5 L619.6,332.1 L619.6,322.9 L626.5,316.0 L632.2,312.5 L641.4,311.4 L646.0,306.8 L646.0,292.9 L644.9,286.0 L648.3,279.1 L655.2,274.0 L663.3,271.6 L671.4,276.8 L680.6,278.0 L685.2,276.3 L695.5,283.7 L701.3,283.2 L712.8,284.3 L722.0,290.6 L725.4,295.2 L735.8,297.5 L740.4,296.4 L743.9,294.1 L754.2,295.2 L761.1,298.1 L766.9,292.9 L776.1,279.1 L780.0,278.0 L776.4,279.6 L785.3,278.5 L794.3,261.7 L792.1,248.2 L805.5,237.0 L805.5,223.5 L814.5,201.0 L828.0,189.8 L834.7,187.6 L848.2,157.2 L861.7,151.6 L863.9,147.1 L875.2,144.9 L888.6,149.4 L897.6,144.9 L906.6,143.8 L915.6,138.2 L926.8,140.4 L944.8,133.7 L956.0,131.4 L965.0,126.9 L983.0,126.9 L989.7,117.9 L989.7,102.2 L998.7,91.0" fill="none" stroke="#dc8b76" stroke-width="3.1" stroke-linejoin="round" stroke-linecap="round"/><path d="M581.4,443.5 L583.8,436.4 L590.9,422.2 L609.8,408.0 L612.1,393.8 L609.8,360.7 L619.2,346.5 L619.6,332.1 L619.6,322.9 L626.5,316.0 L632.2,312.5 L641.4,311.4 L646.0,306.8 L646.0,292.9 L644.9,286.0 L648.3,279.1 L655.2,274.0 L663.3,271.6 L671.4,276.8 L680.6,278.0 L685.2,276.3 L695.5,283.7 L701.3,283.2 L712.8,284.3 L722.0,290.6 L725.4,295.2 L735.8,297.5 L740.4,296.4 L743.9,294.1 L754.2,295.2 L761.1,298.1 L766.9,292.9 L776.1,279.1 L780.0,278.0 L776.4,279.6 L785.3,278.5 L794.3,261.7 L792.1,248.2 L805.5,237.0 L805.5,223.5 L814.5,201.0 L828.0,189.8 L834.7,187.6 L848.2,157.2 L861.7,151.6 L863.9,147.1 L875.2,144.9 L888.6,149.4 L897.6,144.9 L906.6,143.8 L915.6,138.2 L926.8,140.4 L944.8,133.7 L956.0,131.4 L965.0,126.9 L983.0,126.9 L989.7,117.9 L989.7,102.2 L998.7,91.0" fill="none" stroke="#e8927c" stroke-width="2.0" stroke-linejoin="round" stroke-linecap="round"/>
<path d="M581.4,443.5 L597.9,455.3 L628.7,460.1 L633.4,469.5 L672.9,491.8 L681.2,487.6 L697.6,491.8 L722.4,497.9 L747.1,504.1 L778.0,503.8 L784.0,509.8 L796.0,505.3 L802.0,515.8 L816.9,526.3 L831.9,526.3 L842.4,530.8 L852.9,541.3 L864.8,544.2 L870.8,551.7 L875.3,574.2 L864.8,580.2 L861.8,587.7 L846.9,601.1 L834.9,605.6 L818.4,620.6 L822.9,634.1 L813.9,650.5 L824.4,667.0 L819.9,676.0 L807.9,682.0 L793.0,692.5 L778.0,707.4 L747.1,722.3 L730.6,738.8 L726.5,747.1 L722.4,771.8 L714.1,788.2" fill="none" stroke="#dc8b76" stroke-width="3.1" stroke-linejoin="round" stroke-linecap="round"/><path d="M581.4,443.5 L597.9,455.3 L628.7,460.1 L633.4,469.5 L672.9,491.8 L681.2,487.6 L697.6,491.8 L722.4,497.9 L747.1,504.1 L778.0,503.8 L784.0,509.8 L796.0,505.3 L802.0,515.8 L816.9,526.3 L831.9,526.3 L842.4,530.8 L852.9,541.3 L864.8,544.2 L870.8,551.7 L875.3,574.2 L864.8,580.2 L861.8,587.7 L846.9,601.1 L834.9,605.6 L818.4,620.6 L822.9,634.1 L813.9,650.5 L824.4,667.0 L819.9,676.0 L807.9,682.0 L793.0,692.5 L778.0,707.4 L747.1,722.3 L730.6,738.8 L726.5,747.1 L722.4,771.8 L714.1,788.2" fill="none" stroke="#e8927c" stroke-width="2.0" stroke-linejoin="round" stroke-linecap="round"/>
<path d="M718.9,780.0 L703.7,790.1 L668.2,790.1 L647.9,795.2 L642.8,790.1 L622.6,792.7 L602.3,797.7 L592.1,807.9 L576.9,818.0 L574.4,830.7 L576.9,845.9 L579.5,861.1 L589.6,876.3 L599.7,886.5 L601.0,896.6 L597.2,909.3 L592.1,924.5 L589.6,932.1" fill="none" stroke="#dc8b76" stroke-width="3.1" stroke-linejoin="round" stroke-linecap="round"/><path d="M718.9,780.0 L703.7,790.1 L668.2,790.1 L647.9,795.2 L642.8,790.1 L622.6,792.7 L602.3,797.7 L592.1,807.9 L576.9,818.0 L574.4,830.7 L576.9,845.9 L579.5,861.1 L589.6,876.3 L599.7,886.5 L601.0,896.6 L597.2,909.3 L592.1,924.5 L589.6,932.1" fill="none" stroke="#e8927c" stroke-width="2.0" stroke-linejoin="round" stroke-linecap="round"/>
<path d="M589.6,928.3 L571.8,927.1 L559.2,920.7 L551.6,922.0 L546.5,927.1 L523.7,927.1 L503.4,927.1 L490.7,932.1 L483.1,942.3 L484.4,962.6 L495.8,972.7 L490.7,982.8 L473.0,995.5 L455.2,1010.7 L462.8,1018.3 L470.4,1033.5 L467.9,1051.0" fill="none" stroke="#dc8b76" stroke-width="3.1" stroke-linejoin="round" stroke-linecap="round"/><path d="M589.6,928.3 L571.8,927.1 L559.2,920.7 L551.6,922.0 L546.5,927.1 L523.7,927.1 L503.4,927.1 L490.7,932.1 L483.1,942.3 L484.4,962.6 L495.8,972.7 L490.7,982.8 L473.0,995.5 L455.2,1010.7 L462.8,1018.3 L470.4,1033.5 L467.9,1051.0" fill="none" stroke="#e8927c" stroke-width="2.0" stroke-linejoin="round" stroke-linecap="round"/>
<path d="M42.0,748.7 L50.7,757.5 L56.5,769.1 L71.1,779.3 L94.4,774.9 L106.0,783.6 L120.5,793.8 L140.9,786.5 L149.6,774.9 L158.3,772.0 L172.9,777.8 L196.2,783.6 L200.5,788.0 L216.5,772.0 L239.8,760.4 L257.2,751.6 L274.7,760.4 L286.3,763.3 L300.9,754.5 L306.7,742.9 L309.6,740.0 L325.9,727.1 L344.8,708.2 L363.7,722.4 L363.7,750.8 L382.7,755.5 L406.3,746.1 L420.5,746.1 L439.4,760.3 L444.2,774.5 L458.4,793.4 L467.8,812.3 L477.3,826.5 L496.2,840.7 L519.9,840.7 L571.9,840.7" fill="none" stroke="#d7d38a" stroke-width="3.2" stroke-linejoin="round" stroke-linecap="round"/><path d="M42.0,748.7 L50.7,757.5 L56.5,769.1 L71.1,779.3 L94.4,774.9 L106.0,783.6 L120.5,793.8 L140.9,786.5 L149.6,774.9 L158.3,772.0 L172.9,777.8 L196.2,783.6 L200.5,788.0 L216.5,772.0 L239.8,760.4 L257.2,751.6 L274.7,760.4 L286.3,763.3 L300.9,754.5 L306.7,742.9 L309.6,740.0 L325.9,727.1 L344.8,708.2 L363.7,722.4 L363.7,750.8 L382.7,755.5 L406.3,746.1 L420.5,746.1 L439.4,760.3 L444.2,774.5 L458.4,793.4 L467.8,812.3 L477.3,826.5 L496.2,840.7 L519.9,840.7 L571.9,840.7" fill="none" stroke="#f4f29c" stroke-width="2.0" stroke-linejoin="round" stroke-linecap="round"/>
<path d="M602.3,887.8 L660.6,891.6 L751.9,891.6 L767.1,886.5 L767.1,868.7 L789.9,866.2 L789.9,848.5 L772.2,830.7 L751.9,830.7 L718.9,828.2 L680.9,832.0 L668.2,838.3 L647.9,835.8 L632.7,828.2 L617.5,820.6 L604.8,818.0" fill="none" stroke="#d7d38a" stroke-width="3.2" stroke-linejoin="round" stroke-linecap="round"/><path d="M602.3,887.8 L660.6,891.6 L751.9,891.6 L767.1,886.5 L767.1,868.7 L789.9,866.2 L789.9,848.5 L772.2,830.7 L751.9,830.7 L718.9,828.2 L680.9,832.0 L668.2,838.3 L647.9,835.8 L632.7,828.2 L617.5,820.6 L604.8,818.0" fill="none" stroke="#f4f29c" stroke-width="2.0" stroke-linejoin="round" stroke-linecap="round"/>
<path d="M607.3,939.7 L617.5,952.4 L622.6,967.6 L617.5,995.5 L614.9,1051.0" fill="none" stroke="#d7d38a" stroke-width="3.2" stroke-linejoin="round" stroke-linecap="round"/><path d="M607.3,939.7 L617.5,952.4 L622.6,967.6 L617.5,995.5 L614.9,1051.0" fill="none" stroke="#f4f29c" stroke-width="2.0" stroke-linejoin="round" stroke-linecap="round"/>
<path d="M42.0,876.7 L68.2,869.4 L87.1,854.9 L101.6,859.3 L101.6,850.5 L114.7,850.5 L111.8,869.4 L132.2,866.5 L135.1,876.7 L145.3,866.5 L140.9,856.3 L142.3,847.6 L156.9,830.2 L155.4,818.5 L140.9,808.4 L138.0,801.1 L146.7,792.4 L161.3,789.4 L152.5,780.7 L158.3,774.9 L167.1,777.8 L167.1,789.4 L175.8,792.4 L196.2,795.3 L199.1,798.2 L207.8,798.2 L231.1,779.3 L245.6,780.7 L274.7,770.5 L289.2,772.0 L318.3,751.6 L344.5,748.7 L350.3,740.0 L356.6,736.6 L363.7,750.8 L382.7,755.5 L401.6,750.8 L391.0,753.1 L399.8,754.5 L405.6,760.4 L417.2,763.3 L423.0,772.0 L417.2,783.6 L405.6,792.4 L402.7,804.0 L410.0,823.8 L422.0,820.8 L426.5,838.8 L431.0,850.8 L442.9,838.8 L448.9,834.3 L463.9,838.8 L472.9,844.8 L469.9,865.7 L493.8,862.7 L499.8,868.7 L514.8,871.7 L523.8,850.8 L532.8,862.7 L538.8,874.7 L550.7,871.7 L568.7,871.7 L574.7,880.7 L574.7,904.7 L573.2,913.7 L579.2,919.6 L583.7,928.6 L577.7,937.6 L571.7,940.6 L577.7,955.6 L589.7,961.6 L601.6,958.6 L613.6,970.5 L628.6,976.5 L640.6,973.5 L643.6,1000.5 L655.5,976.5 L670.5,991.5 L673.5,1009.5 L679.5,1027.4 L697.5,1039.4 L709.4,1051.1" fill="none" stroke="#7cbf95" stroke-opacity="0.28" stroke-width="5" stroke-linejoin="round" stroke-linecap="round"/>
<path d="M42.0,876.7 L68.2,869.4 L87.1,854.9 L101.6,859.3 L101.6,850.5 L114.7,850.5 L111.8,869.4 L132.2,866.5 L135.1,876.7 L145.3,866.5 L140.9,856.3 L142.3,847.6 L156.9,830.2 L155.4,818.5 L140.9,808.4 L138.0,801.1 L146.7,792.4 L161.3,789.4 L152.5,780.7 L158.3,774.9 L167.1,777.8 L167.1,789.4 L175.8,792.4 L196.2,795.3 L199.1,798.2 L207.8,798.2 L231.1,779.3 L245.6,780.7 L274.7,770.5 L289.2,772.0 L318.3,751.6 L344.5,748.7 L350.3,740.0 L356.6,736.6 L363.7,750.8 L382.7,755.5 L401.6,750.8 L391.0,753.1 L399.8,754.5 L405.6,760.4 L417.2,763.3 L423.0,772.0 L417.2,783.6 L405.6,792.4 L402.7,804.0 L410.0,823.8 L422.0,820.8 L426.5,838.8 L431.0,850.8 L442.9,838.8 L448.9,834.3 L463.9,838.8 L472.9,844.8 L469.9,865.7 L493.8,862.7 L499.8,868.7 L514.8,871.7 L523.8,850.8 L532.8,862.7 L538.8,874.7 L550.7,871.7 L568.7,871.7 L574.7,880.7 L574.7,904.7 L573.2,913.7 L579.2,919.6 L583.7,928.6 L577.7,937.6 L571.7,940.6 L577.7,955.6 L589.7,961.6 L601.6,958.6 L613.6,970.5 L628.6,976.5 L640.6,973.5 L643.6,1000.5 L655.5,976.5 L670.5,991.5 L673.5,1009.5 L679.5,1027.4 L697.5,1039.4 L709.4,1051.1" fill="none" stroke="#7cbf95" stroke-width="2.2" stroke-linejoin="round" stroke-linecap="round" />
<path d="M703.7,790.1 L792.4,795.2 L792.4,805.4 L777.2,820.6 L772.2,830.7" fill="none" stroke="#c9c4be" stroke-width="3.0" stroke-linejoin="round" stroke-linecap="round"/><path d="M703.7,790.1 L792.4,795.2 L792.4,805.4 L777.2,820.6 L772.2,830.7" fill="none" stroke="#fefefe" stroke-width="1.8" stroke-linejoin="round" stroke-linecap="round"/>
<path d="M716.4,787.6 L726.5,805.4 L734.1,813.0" fill="none" stroke="#c9c4be" stroke-width="3.0" stroke-linejoin="round" stroke-linecap="round"/><path d="M716.4,787.6 L726.5,805.4 L734.1,813.0" fill="none" stroke="#fefefe" stroke-width="1.8" stroke-linejoin="round" stroke-linecap="round"/>
<path d="M602.3,927.1 L627.6,934.7 L675.8,929.6 L683.4,942.3 L693.5,947.3 L744.3,947.3 L774.7,957.5" fill="none" stroke="#c9c4be" stroke-width="3.0" stroke-linejoin="round" stroke-linecap="round"/><path d="M602.3,927.1 L627.6,934.7 L675.8,929.6 L683.4,942.3 L693.5,947.3 L744.3,947.3 L774.7,957.5" fill="none" stroke="#fefefe" stroke-width="1.8" stroke-linejoin="round" stroke-linecap="round"/>
<path d="M582.0,853.5 L617.5,856.1 L622.6,886.5" fill="none" stroke="#c9c4be" stroke-width="3.0" stroke-linejoin="round" stroke-linecap="round"/><path d="M582.0,853.5 L617.5,856.1 L622.6,886.5" fill="none" stroke="#fefefe" stroke-width="1.8" stroke-linejoin="round" stroke-linecap="round"/>
<path d="M473.0,825.6 L475.5,848.5 L485.6,858.6 L508.5,861.1" fill="none" stroke="#c9c4be" stroke-width="3.0" stroke-linejoin="round" stroke-linecap="round"/><path d="M473.0,825.6 L475.5,848.5 L485.6,858.6 L508.5,861.1" fill="none" stroke="#fefefe" stroke-width="1.8" stroke-linejoin="round" stroke-linecap="round"/>
<path d="M675.8,853.5 L668.2,906.8 L678.3,927.1" fill="none" stroke="#9ccbdc" stroke-width="1.6" stroke-linejoin="round" stroke-linecap="round" />
<path d="M746.8,894.1 L734.1,937.2" fill="none" stroke="#9ccbdc" stroke-width="1.6" stroke-linejoin="round" stroke-linecap="round" />
<path d="M637.8,891.6 L653.0,927.1 L675.8,927.1 L718.9,927.1 L731.6,937.2 L759.5,944.8 L774.7,954.9" fill="none" stroke="#9ccbdc" stroke-width="1.6" stroke-linejoin="round" stroke-linecap="round" />
<path d="M688.5,937.2 L708.8,929.6 L729.0,932.1 L731.6,937.2 L703.7,939.7 L691.0,939.7 Z" fill="#a8d5a8"/>
<path d="M668.2,1015.8 L683.4,1013.3 L696.1,1015.8 L693.5,1020.9 L680.9,1023.4 L669.5,1022.1 Z" fill="#a8d5a8"/>
<text x="557.7" y="127.5" font-family="Liberation Sans" font-size="14" font-style="italic" font-weight="normal" fill="#6d4c6d" text-anchor="start" textLength="55" lengthAdjust="spacingAndGlyphs" stroke="rgba(255,255,255,0.75)" stroke-width="2.4" paint-order="stroke">Bengalon</text>
<text x="560" y="143.5" font-family="Liberation Sans" font-size="14" font-style="italic" font-weight="normal" fill="#6d4c6d" text-anchor="start" textLength="52" lengthAdjust="spacingAndGlyphs" stroke="rgba(255,255,255,0.75)" stroke-width="2.4" paint-order="stroke">tambang</text>
<text x="556.7" y="158.5" font-family="Liberation Sans" font-size="14" font-style="italic" font-weight="normal" fill="#6d4c6d" text-anchor="start" textLength="57" lengthAdjust="spacingAndGlyphs" stroke="rgba(255,255,255,0.75)" stroke-width="2.4" paint-order="stroke">batu bara</text>
<text x="385.3" y="596.5" font-family="Liberation Sans" font-size="14" font-style="italic" font-weight="normal" fill="#6d4c6d" text-anchor="start" textLength="38" lengthAdjust="spacingAndGlyphs" stroke="rgba(255,255,255,0.75)" stroke-width="2.4" paint-order="stroke">Kaltim</text>
<text x="372.6" y="611.5" font-family="Liberation Sans" font-size="14" font-style="italic" font-weight="normal" fill="#6d4c6d" text-anchor="start" textLength="64" lengthAdjust="spacingAndGlyphs" stroke="rgba(255,255,255,0.75)" stroke-width="2.4" paint-order="stroke">Prima Coal</text>
<text x="321" y="223" font-family="Liberation Sans" font-size="10" font-style="normal" font-weight="normal" fill="#3a3a3a" text-anchor="start" textLength="75" lengthAdjust="spacingAndGlyphs" stroke="rgba(255,255,255,0.75)" stroke-width="2.4" paint-order="stroke">Tebangan Lembak</text>
<text x="347" y="237.5" font-family="Liberation Sans" font-size="10" font-style="normal" font-weight="normal" fill="#3a3a3a" text-anchor="start" textLength="61.5" lengthAdjust="spacingAndGlyphs" stroke="rgba(255,255,255,0.75)" stroke-width="2.4" paint-order="stroke">Tepian Langsat</text>
<text x="611" y="262" font-family="Liberation Sans" font-size="10" font-style="normal" font-weight="normal" fill="#3a3a3a" text-anchor="start" textLength="53" lengthAdjust="spacingAndGlyphs" stroke="rgba(255,255,255,0.75)" stroke-width="2.4" paint-order="stroke">Sepaso Barat</text>
<text x="696.7" y="291.5" font-family="Liberation Sans" font-size="10" font-style="normal" font-weight="normal" fill="#3a3a3a" text-anchor="start" textLength="29.3" lengthAdjust="spacingAndGlyphs" stroke="rgba(255,255,255,0.75)" stroke-width="2.4" paint-order="stroke">Sepaso</text>
<text x="708.2" y="311.5" font-family="Liberation Sans" font-size="10" font-style="normal" font-weight="normal" fill="#3a3a3a" text-anchor="start" textLength="55.5" lengthAdjust="spacingAndGlyphs" stroke="rgba(255,255,255,0.75)" stroke-width="2.4" paint-order="stroke">Sepaso Timur</text>
<text x="662.7" y="325.5" font-family="Liberation Sans" font-size="10" font-style="normal" font-weight="normal" fill="#3a3a3a" text-anchor="start" textLength="62" lengthAdjust="spacingAndGlyphs" stroke="rgba(255,255,255,0.75)" stroke-width="2.4" paint-order="stroke">Sepaso Selatan</text>
<text x="1186.4" y="220.5" font-family="Liberation Sans" font-size="10" font-style="normal" font-weight="normal" fill="#3a3a3a" text-anchor="start" textLength="30.6" lengthAdjust="spacingAndGlyphs" stroke="rgba(255,255,255,0.75)" stroke-width="2.4" paint-order="stroke">Sekerat</text>
<text x="991.7" y="600" font-family="Liberation Sans" font-size="10" font-style="normal" font-weight="normal" fill="#3a3a3a" text-anchor="start" textLength="67.8" lengthAdjust="spacingAndGlyphs" stroke="rgba(255,255,255,0.75)" stroke-width="2.4" paint-order="stroke">Muara Bengalon</text>
<text x="465.5" y="845" font-family="Liberation Sans" font-size="10" font-style="normal" font-weight="normal" fill="#3a3a3a" text-anchor="start" textLength="39" lengthAdjust="spacingAndGlyphs" stroke="rgba(255,255,255,0.75)" stroke-width="2.4" paint-order="stroke">Kabo Jaya</text>
<text x="564.8" y="820" font-family="Liberation Sans" font-size="10" font-style="normal" font-weight="normal" fill="#3a3a3a" text-anchor="start" textLength="55" lengthAdjust="spacingAndGlyphs" stroke="rgba(255,255,255,0.75)" stroke-width="2.4" paint-order="stroke">nga Gembara</text>
<text x="589.4" y="889" font-family="Liberation Sans" font-size="10" font-style="normal" font-weight="normal" fill="#3a3a3a" text-anchor="start" textLength="52" lengthAdjust="spacingAndGlyphs" stroke="rgba(255,255,255,0.75)" stroke-width="2.4" paint-order="stroke">Teluk Lingga</text>
<text x="477.3" y="934" font-family="Liberation Sans" font-size="10" font-style="normal" font-weight="normal" fill="#3a3a3a" text-anchor="start" textLength="72" lengthAdjust="spacingAndGlyphs" stroke="rgba(255,255,255,0.75)" stroke-width="2.4" paint-order="stroke">Persiapan Pinang</text>
<text x="503.3" y="945.5" font-family="Liberation Sans" font-size="10" font-style="normal" font-weight="normal" fill="#3a3a3a" text-anchor="start" textLength="20" lengthAdjust="spacingAndGlyphs" stroke="rgba(255,255,255,0.75)" stroke-width="2.4" paint-order="stroke">Raya</text>
<text x="561" y="942" font-family="Liberation Sans" font-size="12.5" font-style="normal" font-weight="normal" fill="#3a3a3a" text-anchor="start" textLength="47.4" lengthAdjust="spacingAndGlyphs" stroke="rgba(255,255,255,0.75)" stroke-width="2.4" paint-order="stroke">Sangatta</text>
<text x="542.6" y="988.5" font-family="Liberation Sans" font-size="10" font-style="normal" font-weight="normal" fill="#3a3a3a" text-anchor="start" textLength="68.6" lengthAdjust="spacingAndGlyphs" stroke="rgba(255,255,255,0.75)" stroke-width="2.4" paint-order="stroke">Sangatta Selatan</text>
<text x="1300" y="160" font-family="Liberation Sans" font-size="9" font-style="normal" font-weight="normal" fill="#6d4c6d" text-anchor="start" transform="rotate(-25 1300 160)" stroke="rgba(255,255,255,0.75)" stroke-width="2.4" paint-order="stroke">Kutai Timur</text>
<text x="905" y="737" font-family="Liberation Sans" font-size="9" font-style="normal" font-weight="normal" fill="#6d4c6d" text-anchor="start" transform="rotate(-62 905 737)" stroke="rgba(255,255,255,0.75)" stroke-width="2.4" paint-order="stroke">Kutai Timur</text>
<path d="M42.0,769.1 L47.8,783.6 L59.5,789.4 L68.2,798.2 L76.9,792.4 L79.8,812.7 L88.5,801.1 L97.3,806.9 L100.2,818.5 L97.3,827.3 L111.8,824.4 L129.3,827.3 L140.9,812.7" fill="none" stroke="#9ccbdc" stroke-width="1.8" stroke-linejoin="round" stroke-linecap="round" />
<path transform="translate(82.7 924.7) scale(0.85)" d="M0 -6 L1 -1.5 L6 1.5 L6 2.5 L1 1 L0.8 4 L2.5 5.5 L2.5 6 L0 5.2 L-2.5 6 L-2.5 5.5 L-0.8 4 L-1 1 L-6 2.5 L-6 1.5 L-1 -1.5 Z" fill="#7d5fc7"/>
<path d="M615.0,282.6 L625.3,268.8 L638.0,263.0 L648.3,266.5" fill="none" stroke="#b9b6b2" stroke-width="1.0" stroke-linejoin="round" stroke-linecap="round" />
<path d="M629.9,296.4 L638.0,281.4 L648.3,274.5" fill="none" stroke="#b9b6b2" stroke-width="1.0" stroke-linejoin="round" stroke-linecap="round" />
<path d="M652.9,288.3 L650.6,311.4" fill="none" stroke="#b9b6b2" stroke-width="1.0" stroke-linejoin="round" stroke-linecap="round" />
<path d="M657.5,279.1 L666.8,302.1 L680.6,306.8 L686.3,313.7" fill="none" stroke="#b9b6b2" stroke-width="1.0" stroke-linejoin="round" stroke-linecap="round" />
<path d="M685.2,280.3 L686.3,332.1" fill="none" stroke="#b9b6b2" stroke-width="1.0" stroke-linejoin="round" stroke-linecap="round" />
<path d="M678.3,261.9 L680.6,286.0" fill="none" stroke="#b9b6b2" stroke-width="1.0" stroke-linejoin="round" stroke-linecap="round" />
<path d="M688.6,266.5 L684.0,278.0" fill="none" stroke="#b9b6b2" stroke-width="1.0" stroke-linejoin="round" stroke-linecap="round" />
<path d="M685.2,295.2 L722.0,299.8" fill="none" stroke="#b9b6b2" stroke-width="1.0" stroke-linejoin="round" stroke-linecap="round" />
<path d="M730.0,240.0 L724.3,268.8 L727.7,276.8 L719.7,288.3" fill="none" stroke="#b9b6b2" stroke-width="1.0" stroke-linejoin="round" stroke-linecap="round" />
<path d="M640.3,240.0 L639.1,251.5 L650.6,266.5" fill="none" stroke="#b9b6b2" stroke-width="1.0" stroke-linejoin="round" stroke-linecap="round" />
<path d="M649.5,240.0 L648.3,252.7 L654.1,267.6" fill="none" stroke="#b9b6b2" stroke-width="1.0" stroke-linejoin="round" stroke-linecap="round" />
<path d="M620.7,312.5 L634.5,311.4" fill="none" stroke="#b9b6b2" stroke-width="1.0" stroke-linejoin="round" stroke-linecap="round" />
<path d="M701.3,273.4 L703.6,283.7" fill="none" stroke="#b9b6b2" stroke-width="1.0" stroke-linejoin="round" stroke-linecap="round" />
<path d="M709.3,276.8 L710.5,283.7" fill="none" stroke="#b9b6b2" stroke-width="1.0" stroke-linejoin="round" stroke-linecap="round" />
<path d="M731.2,299.8 L738.1,325.2" fill="none" stroke="#b9b6b2" stroke-width="1.0" stroke-linejoin="round" stroke-linecap="round" />
<path d="M758.8,319.4 L763.4,304.4 L770.3,292.9" fill="none" stroke="#b9b6b2" stroke-width="1.0" stroke-linejoin="round" stroke-linecap="round" />
<path d="M664.4,295.2 L671.4,291.8" fill="none" stroke="#b9b6b2" stroke-width="1.0" stroke-linejoin="round" stroke-linecap="round" />
<path d="M667.9,261.9 L670.2,271.1" fill="none" stroke="#b9b6b2" stroke-width="1.0" stroke-linejoin="round" stroke-linecap="round" />
<path d="M600.0,335.5 L613.8,339.0 L626.5,355.1" fill="none" stroke="#b9b6b2" stroke-width="1.0" stroke-linejoin="round" stroke-linecap="round" />
<path d="M778.0,577.2 L793.0,560.7 L802.0,542.7 L813.9,530.8 L831.9,524.8 L840.9,526.3" fill="none" stroke="#b9b6b2" stroke-width="1.0" stroke-linejoin="round" stroke-linecap="round" />
<path d="M875.3,575.7 L894.8,566.7 L909.7,565.2 L927.7,566.7 L936.7,577.2 L938.2,589.2 L945.7,614.6 L987.6,599.6 L1020.5,590.7" fill="none" stroke="#b9b6b2" stroke-width="1.0" stroke-linejoin="round" stroke-linecap="round" />
<path d="M936.7,589.2 L975.6,566.7" fill="none" stroke="#b9b6b2" stroke-width="1.0" stroke-linejoin="round" stroke-linecap="round" />
<path d="M866.3,586.2 L882.8,596.6 L881.3,617.6 L873.8,622.1 L879.8,623.6 L894.8,634.1 L906.8,647.5 L903.8,662.5 L899.3,683.5" fill="none" stroke="#b9b6b2" stroke-width="1.0" stroke-linejoin="round" stroke-linecap="round" />
<path d="M825.9,635.6 L840.9,635.6 L851.4,640.1" fill="none" stroke="#b9b6b2" stroke-width="1.0" stroke-linejoin="round" stroke-linecap="round" />
<path d="M825.9,664.0 L843.9,658.0" fill="none" stroke="#b9b6b2" stroke-width="1.0" stroke-linejoin="round" stroke-linecap="round" />
<path d="M629.8,831.8 L629.8,874.9 L627.9,904.8" fill="none" stroke="#b9b6b2" stroke-width="0.8" stroke-linejoin="round" stroke-linecap="round" />
<path d="M618.6,850.5 L671.0,854.3 L700.0,854.3" fill="none" stroke="#b9b6b2" stroke-width="0.8" stroke-linejoin="round" stroke-linecap="round" />
<path d="M642.9,874.9 L700.0,878.6" fill="none" stroke="#b9b6b2" stroke-width="0.8" stroke-linejoin="round" stroke-linecap="round" />
<path d="M659.8,854.3 L652.3,874.9 L644.8,897.3 L641.0,912.3" fill="none" stroke="#b9b6b2" stroke-width="0.8" stroke-linejoin="round" stroke-linecap="round" />
<path d="M682.2,846.8 L678.5,904.8" fill="none" stroke="#b9b6b2" stroke-width="0.8" stroke-linejoin="round" stroke-linecap="round" />
<path d="M652.3,902.9 L689.7,901.0" fill="none" stroke="#b9b6b2" stroke-width="0.8" stroke-linejoin="round" stroke-linecap="round" />
<path d="M674.7,912.3 L700.0,912.3" fill="none" stroke="#b9b6b2" stroke-width="0.8" stroke-linejoin="round" stroke-linecap="round" />
<path d="M652.3,824.3 L671.0,820.6 L682.2,822.5" fill="none" stroke="#b9b6b2" stroke-width="0.8" stroke-linejoin="round" stroke-linecap="round" />
<path d="M700.9,818.7 L682.2,824.3 L671.0,831.8" fill="none" stroke="#b9b6b2" stroke-width="0.8" stroke-linejoin="round" stroke-linecap="round" />
<path d="M637.3,906.7 L648.5,910.4 L659.8,904.8" fill="none" stroke="#b9b6b2" stroke-width="0.8" stroke-linejoin="round" stroke-linecap="round" />
<path d="M671.0,887.9 L697.2,887.9" fill="none" stroke="#b9b6b2" stroke-width="0.8" stroke-linejoin="round" stroke-linecap="round" />
<path d="M657.9,921.6 L674.7,919.8" fill="none" stroke="#b9b6b2" stroke-width="0.8" stroke-linejoin="round" stroke-linecap="round" />
<path d="M689.7,949.7 L700.0,942.2" fill="none" stroke="#b9b6b2" stroke-width="0.8" stroke-linejoin="round" stroke-linecap="round" />
<path d="M627.9,949.7 L637.3,1000.0" fill="none" stroke="#b9b6b2" stroke-width="0.8" stroke-linejoin="round" stroke-linecap="round" />
<path d="M540.0,955.3 L568.1,959.1 L577.4,975.9 L596.1,979.6" fill="none" stroke="#b9b6b2" stroke-width="0.8" stroke-linejoin="round" stroke-linecap="round" />
<path d="M648.5,953.4 L656.0,968.4 L671.0,979.6" fill="none" stroke="#b9b6b2" stroke-width="0.8" stroke-linejoin="round" stroke-linecap="round" />
<path d="M867.6,778.2 L883.0,760.3 L885.0,762.3 L869.7,780.2 Z" fill="#c9c6d6"/>
<path transform="translate(877.9 768) scale(0.95)" d="M0 -6 L1 -1.5 L6 1.5 L6 2.5 L1 1 L0.8 4 L2.5 5.5 L2.5 6 L0 5.2 L-2.5 6 L-2.5 5.5 L-0.8 4 L-1 1 L-6 2.5 L-6 1.5 L-1 -1.5 Z" fill="#7d5fc7"/>
<path d="M842.1,762.8 L857.4,761.5 L862.5,770.5 L867.6,775.6" fill="none" stroke="#b9b6b2" stroke-width="1.0" stroke-linejoin="round" stroke-linecap="round" />
<path d="M860.0,767.9 L852.3,773.0 L851.0,785.8" fill="none" stroke="#b9b6b2" stroke-width="1.0" stroke-linejoin="round" stroke-linecap="round" />
<path d="M844.6,765.4 L848.5,780.7" fill="none" stroke="#b9b6b2" stroke-width="1.0" stroke-linejoin="round" stroke-linecap="round" />
<path d="M856.1,785.8 L862.5,787.1 L863.8,798.6 L857.4,797.3 Z" fill="#cfe7b8"/>
<path d="M1269.8,187 L1267.5,180 L1276.8,168.4 L1293,161.5 L1309.4,156.8 L1309.4,161.5 Z" fill="#dcdad8"/>
<path d="M1286,177 L1307,210 L1310,209" fill="none" stroke="#d5e8ee" stroke-width="1.0" stroke-linejoin="round" stroke-linecap="round" />
<path d="M1162,252 L1178,270" fill="none" stroke="#d5e8ee" stroke-width="1.0" stroke-linejoin="round" stroke-linecap="round" />
<path d="M411.4,940.7 L425.9,937.8 L437.6,929.1 L455.0,926.2 L462.0,920.3" fill="none" stroke="#b9b6b2" stroke-width="1.0" stroke-linejoin="round" stroke-linecap="round" />
<path d="M431.8,1025.0 L449.2,1014.9 L462.0,1010.5" fill="none" stroke="#b9b6b2" stroke-width="1.0" stroke-linejoin="round" stroke-linecap="round" />
</svg>
<div class="mk" style="left:706.1px;top:53.0px;width:43.6px;height:43.6px;border-width:2.8px;background-clip:padding-box;background-image:conic-gradient(#10b981 0deg 205.7deg,#ef4444 205.7deg 360.0deg)"><span style="line-height:41.5px;font-family:'Liberation Sans',sans-serif">7</span></div>
<div class="mk" style="left:783.0px;top:65.1px;width:34.6px;height:34.6px;border-width:2.8px;background-clip:padding-box;background-image:conic-gradient(#10b981 0deg 360deg)"><span style="line-height:32.5px;font-family:'Liberation Sans',sans-serif">2</span></div>
<div class="mk" style="left:1095.2px;top:147.7px;width:42.2px;height:42.2px;border-width:2.8px;background-clip:padding-box;background-image:conic-gradient(#10b981 0deg 180deg,#ef4444 180deg 360deg)"><span style="line-height:40.1px;font-family:'Liberation Serif',serif">6</span></div>
<div class="mk" style="left:586.2px;top:372.3px;width:46.6px;height:46.6px;border-width:2.8px;background-clip:padding-box;background-image:conic-gradient(#10b981 0deg 324deg,#f59e0b 324deg 360deg)"><span style="line-height:44.5px;font-family:'Liberation Sans',sans-serif">10</span></div>
<div class="mk" style="left:475.1px;top:476.1px;width:54.8px;height:54.8px;border-width:2.8px;background-clip:padding-box;background-image:conic-gradient(#10b981 0deg 348.75deg,#ef4444 348.75deg 360.0deg)"><span style="line-height:52.7px;font-family:'Liberation Sans',sans-serif">32</span></div>
<div class="mk" style="left:294.2px;top:537.3px;width:43.6px;height:43.6px;border-width:2.8px;background-clip:padding-box;background-image:conic-gradient(#10b981 0deg 154deg,#ef4444 154deg 360deg)"><span style="line-height:41.5px;font-family:'Liberation Sans',sans-serif">7</span></div>
<div class="mk" style="left:361.0px;top:613.3px;width:41.6px;height:41.6px;border-width:2.8px;background-clip:padding-box;background-image:conic-gradient(#10b981 0deg 216deg,#ef4444 216deg 360deg)"><span style="line-height:39.5px;font-family:'Liberation Sans',sans-serif">5</span></div>
<div class="mk" style="left:649.2px;top:636.1px;width:39.6px;height:39.6px;border-width:2.8px;background-clip:padding-box;background-image:conic-gradient(#10b981 0deg 90deg,#ef4444 90deg 360deg)"><span style="line-height:37.5px;font-family:'Liberation Sans',sans-serif">4</span></div>
<div class="mk" style="left:408.3px;top:670.4px;width:54.4px;height:54.4px;border-width:2.8px;background-clip:padding-box;background-image:conic-gradient(#10b981 0deg 338deg,#ef4444 338deg 360deg)"><span style="line-height:52.3px;font-family:'Liberation Sans',sans-serif">33</span></div>
<div class="mk" style="left:463.2px;top:683.1px;width:66.6px;height:66.6px;border-width:2.8px;background-clip:padding-box;background-image:conic-gradient(#10b981 0deg 348deg,#ef4444 348deg 360deg)"><span style="line-height:64.5px;font-family:'Liberation Sans',sans-serif">180</span></div>
<div class="mk" style="left:677.2px;top:715.5px;width:34.8px;height:34.8px;border-width:2.8px;background-clip:padding-box;background-image:conic-gradient(#ef4444 0deg 360deg)"><span style="line-height:32.7px;font-family:'Liberation Sans',sans-serif">2</span></div>
<div class="mk" style="left:777.0px;top:704.8px;width:61.2px;height:61.2px;border-width:2.8px;background-clip:padding-box;background-image:conic-gradient(#10b981 0deg 344deg,#ef4444 344deg 360deg)"><span style="line-height:59.1px;font-family:'Liberation Sans',sans-serif">73</span></div>
<div class="mk" style="left:536.8px;top:376.5px;width:16.4px;height:16.4px;border-width:2.2px;background:#10b981"></div>
<div class="mk" style="left:693.1px;top:542.0px;width:17.0px;height:17.0px;border-width:2.2px;background:#10b981"></div>
<div class="mk" style="left:482.2px;top:575.1px;width:17.0px;height:17.0px;border-width:2.2px;background:#10b981"></div>
<div id="pill"><span>KPC CCTV Maps</span></div>
<div id="circ"><svg style="position:absolute;left:0;top:0" width="50" height="50" viewBox="0 0 50 50">
 <path d="M24 22.5 Q27 19 31 18.5 L33 16 L33.5 18 L35.5 15.8 L36 17.6 L38.5 15.5 Q37 22 31 26.5 L24.5 27.2 Z" fill="#e8170b"/>
 <text x="11.5" y="26.8" font-family="Liberation Sans" font-weight="bold" font-style="italic" font-size="7.6" fill="#111">KPC</text>
 <rect x="12" y="28" width="21" height="1" fill="#555"/>
 <text x="3" y="35.4" font-family="Liberation Sans" font-weight="bold" font-size="4" fill="#111" textLength="43" lengthAdjust="spacingAndGlyphs">'T KALTIM <tspan fill="#f08080">PRIMA</tspan> COA'</text>
</svg></div>
<div id="search"><span>Find camera by Name or IP...</span></div>
<div class="lbtn" style="top:63px;height:61px">
 <div style="position:absolute;left:0;top:29px;width:28px;height:1px;background:#ccc"></div>
 <svg style="position:absolute;left:0;top:0" width="28" height="57" viewBox="0 0 28 57"><path d="M8 14.5h12M14 8.5v12" stroke="#000" stroke-width="2.6"/><path d="M8.5 43.5h11" stroke="#000" stroke-width="2.4"/></svg>
</div>
<div class="lbtn" style="top:136px;height:32px">
 <svg style="position:absolute;left:0;top:0" width="28" height="28" viewBox="0 0 28 28"><path d="M7.5 11V7.5H11M17 7.5h3.5V11M20.5 17v3.5H17M11 20.5H7.5V17" fill="none" stroke="#333" stroke-width="1.8"/></svg>
</div>
<div id="stats">
 <div style="position:absolute;left:0;top:8px;width:191px;text-align:center;font-weight:bold;line-height:16px">ALL Camera Stats</div>
 <div class="d" style="top:33.5px;background:#22c55e"></div><div class="r" style="top:32px;left:27.5px;color:#4ade80">Online: 363</div>
 <div class="d" style="top:55px;background:#eab308"></div><div class="r" style="top:54px;left:27.5px;color:#facc15">High Latency (&gt;50 ms): 1</div>
 <div class="d" style="top:76px;background:#ef4444"></div><div class="r" style="top:75px;left:27.5px;color:#f87171">Offline: 41</div>
 <div class="r" style="top:96px;left:8px;color:#fff">Total: 405</div>
</div>
<div id="legend">
 <div class="cb" style="top:15.5px"><svg width="15" height="15"><path d="M3.5 7.8l2.6 2.6 5.4-5.6" fill="none" stroke="#fff" stroke-width="2"/></svg></div><div class="ball" style="top:14.5px;background:radial-gradient(circle at 40% 35%,#8ef0b0,#22c55e 60%,#15803d)"></div><div class="t" style="top:14px">Online</div>
 <div class="cb" style="top:43.5px"><svg width="15" height="15"><path d="M3.5 7.8l2.6 2.6 5.4-5.6" fill="none" stroke="#fff" stroke-width="2"/></svg></div><div class="ball" style="top:42.5px;background:radial-gradient(circle at 40% 35%,#fde68a,#eab308 60%,#a16207)"></div><div class="t" style="top:42px">High Latency</div>
 <div class="cb" style="top:71.5px"><svg width="15" height="15"><path d="M3.5 7.8l2.6 2.6 5.4-5.6" fill="none" stroke="#fff" stroke-width="2"/></svg></div><div class="ball" style="top:70.5px;background:radial-gradient(circle at 40% 35%,#fca5a5,#e11d48 60%,#9f1239)"></div><div class="t" style="top:70px">Offline</div>
</div>
<div id="attr">© OpenStreetMap contributors</div>

</div>
</body></html>
